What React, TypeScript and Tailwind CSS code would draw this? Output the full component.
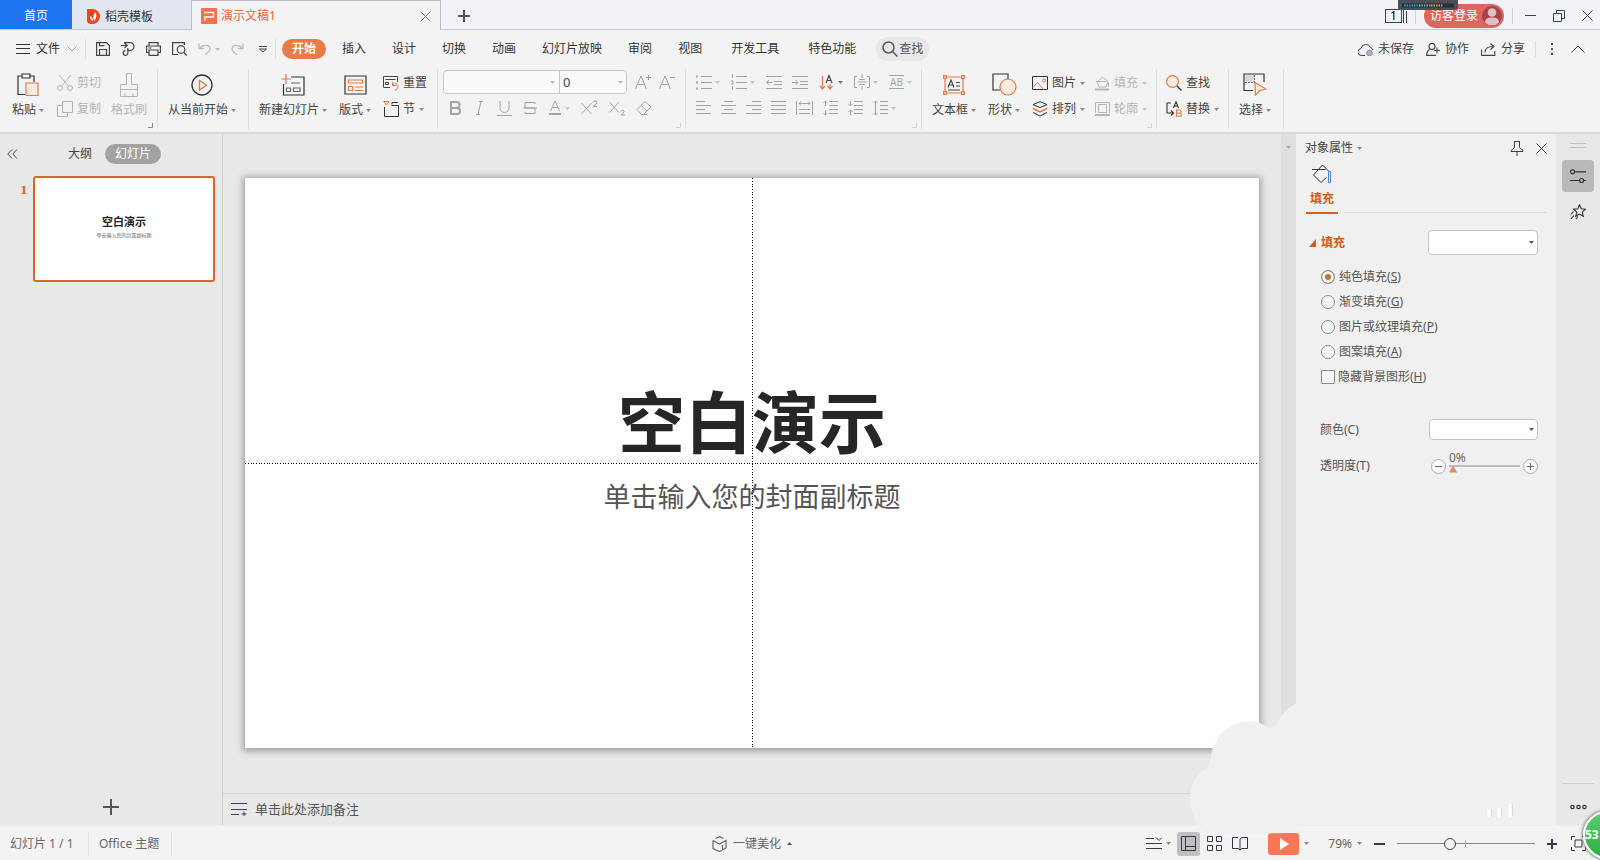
import React from "react";

type P = { children?: React.ReactNode; className?: string };

function Svg({ w, h, children, className = "", sw = 1 }: P & { w: number; h: number; sw?: number }) {
  return (
    <svg
      width={w}
      height={h}
      viewBox={`0 0 ${w} ${h}`}
      fill="none"
      stroke="currentColor"
      strokeWidth={sw}
      className={`shrink-0 ${className}`}
      aria-hidden="true"
    >
      {children}
    </svg>
  );
}

function Caret({ className = "text-[#8c8c8c]", up = false }: { className?: string; up?: boolean }) {
  return (
    <svg width="5" height="3" viewBox="0 0 5 3" className={`shrink-0 ${className}`} aria-hidden="true">
      <path d={up ? "M0 3L2.500 0L5 3z" : "M0 0h5L2.500 3z"} fill="currentColor" />
    </svg>
  );
}

const OR = "#dd7c4a";

/* ---------- title bar ---------- */

function TitleBar() {
  return (
    <header className="flex h-[30px] items-stretch bg-[#f2f3f7] text-[13px]">
      <button className="w-[72px] border-b border-[#c5cbdb] bg-[#1e74f0] pt-[2px] text-xs text-white">首页</button>
      <button className="flex w-[119px] items-center gap-[5px] border-b border-[#c0c4d3] bg-[#e2e6f1] pt-1 pl-[15px] text-xs text-[#333]">
        <svg width="13" height="15" viewBox="0 0 13 15" aria-hidden="true">
          <path d="M0 0h5.500a7.500 7.500 0 0 1 0 15H4a4 4 0 0 1-4-4z" fill="#f2431c" />
          <path d="M6.300 12.500C4 11.500 2.800 9.500 3 7c1.800 .8 3 3 3.300 5.500zM7 12C5.800 8.500 6.300 5 8.500 3c1.600 3 1 6.500-1.500 9z" fill="#fff" />
        </svg>
        稻壳模板
      </button>
      <div className="flex w-[250px] items-center border-x border-t border-[#b9bdcf] bg-[#f3f3f3] px-[9px] pt-px text-[#e8673b]">
        <svg width="16" height="16" viewBox="0 0 16 16" aria-hidden="true">
          <rect width="16" height="16" rx="1" fill="#f3714b" />
          <path d="M3 4.500h9.500v4.500H4v4" fill="none" stroke="#fff" strokeWidth="1.300" />
        </svg>
        <span className="ml-1 text-xs">演示文稿1</span>
        <button aria-label="关闭标签" className="ml-auto text-[#777]">
          <Svg w={11} h={11}><path d="M.5 .5l10 10M10.500 .5l-10 10" /></Svg>
        </button>
      </div>
      <div className="flex flex-1 items-center border-b border-[#c5cbdb] pt-[2px]">
        <button aria-label="新建标签" className="ml-[17px] text-[#555]">
          <Svg w={12} h={12} sw={2}><path d="M6 0v12M0 6h12" /></Svg>
        </button>
        <div className="relative ml-auto flex items-center">
          <button aria-label="窗口 1" className="flex items-center gap-px text-[#35425f]">
            <span className="flex h-[14px] w-[17px] items-center justify-center border border-[#35425f] text-xs leading-none text-black">1</span>
            <Svg w={4} h={14}><path d="M.5 0v14M3.500 2v12" /></Svg>
          </button>
          <span className="ml-2 h-4 w-px bg-[#d0d2d8]" />
          <button className="ml-2 flex h-6 w-20 items-center gap-1 rounded-full bg-[#dc675d] pl-[6px] text-xs text-white">
            访客登录
            <svg width="20" height="20" viewBox="0 0 20 20" aria-hidden="true">
              <circle cx="10" cy="10" r="10" fill="#a8434a" />
              <circle cx="10" cy="6.500" r="4.300" fill="#dfc0c4" />
              <path d="M3 16.500c0-3.500 2-5 7-5s7 1.500 7 5a10 10 0 0 1-14 0z" fill="#dfc0c4" />
            </svg>
          </button>
          <svg width="60" height="10" viewBox="0 0 60 10" className="absolute -top-[4px] left-[13px]" aria-hidden="true">
            <path d="M0 0h60v8q0 2-2 2H2q-2 0-2-2z" fill="#4b4f58" />
            <path d="M4 3.500h52v4H4z" fill="#2b2f38" />
            <path d="M6 5.500h16" stroke="#2ba4dc" strokeWidth="2" strokeDasharray="1.500 1" />
            <path d="M21 5.500h12" stroke="#6fb7a0" strokeWidth="2" strokeDasharray="1.500 1" />
            <path d="M33 5.500h12" stroke="#c9ad42" strokeWidth="2" strokeDasharray="1.500 1" />
          </svg>
          <span className="ml-2 h-4 w-px bg-[#d0d2d8]" />
          <div className="flex items-center gap-[17px] pl-3 pr-[7px] text-[#35425f]">
            <button aria-label="最小化"><Svg w={11} h={12}><path d="M0 5.500h11" /></Svg></button>
            <button aria-label="还原"><Svg w={12} h={12}><path d="M.5 3.500h8v8h-8zM3.500 3.500v-3h8v8h-3" /></Svg></button>
            <button aria-label="关闭"><Svg w={11} h={11}><path d="M.5 .5l10 10M10.500 .5l-10 10" /></Svg></button>
          </div>
        </div>
      </div>
    </header>
  );
}

/* ---------- menu row ---------- */

function MenuRow() {
  return (
    <nav className="flex h-[38px] items-center pl-4 text-xs text-[#333]">
      <button className="flex items-center gap-[6px] whitespace-nowrap">
        <Svg w={14} h={10}><path d="M0 .5h14M0 4.500h14M0 9.500h14" /></Svg>
        文件
        <Svg w={10} h={6} className="ml-px text-[#999]"><path d="M.5 .5l4.500 4.500 4.500-4.500" /></Svg>
      </button>
      <span className="ml-[8px] h-5 w-px bg-[#dcdcdc]" />
      <div className="flex items-center gap-[11px] pl-[10px] text-[#444]">
        <button aria-label="保存">
          <Svg w={14} h={14} sw={1.2}><path d="M.6 .6h9.800l3 3v9.800H.6zM3.500 13.400V7.500h7v5.900M3.500 .6v3h5" /></Svg>
        </button>
        <button aria-label="输出">
          <Svg w={14} h={14} sw={1.2}><path d="M3 .6h6a4 4 0 0 1 0 8H6.500M0 3.500h6M3.500 1l2.700 2.500L3.500 6M6.800 6v5a2.300 2.300 0 1 1-2.300-2.300" /></Svg>
        </button>
        <button aria-label="打印">
          <Svg w={15} h={14} sw={1.2}><path d="M3 4V.6h9V4M3 10.500H.6V4h13.800v6.500H12M3 8h9v5.400H3zM2.500 6h3" /></Svg>
        </button>
        <button aria-label="打印预览">
          <Svg w={15} h={14} sw={1.2}><path d="M6 12.500H.6V.6h11.800V3M12 10.500l2.600 3" /><circle cx="9" cy="7.500" r="3.800" /></Svg>
        </button>
        <button aria-label="撤销" className="flex items-center gap-1 text-[#bdbdbd]">
          <Svg w={13} h={12} sw={1.3}><path d="M1 .5v5h5M1.500 5.500C4 1.500 12 1 12 6c0 3-3 4-5 5.500" /></Svg>
          <Caret className="text-[#bdbdbd]" />
        </button>
        <button aria-label="恢复" className="text-[#bdbdbd]">
          <Svg w={13} h={12} sw={1.3}><path d="M12 .5v5H7M11.500 5.500C9 1.500 1 1 1 6c0 3 3 4 5 5.500" /></Svg>
        </button>
        <button aria-label="自定义快速访问" className="ml-1">
          <Svg w={8} h={7}><path d="M0 .5h8M.5 3l3.500 3 3.500-3z" /></Svg>
        </button>
      </div>
      <span className="ml-[8px] h-5 w-px bg-[#dcdcdc]" />
      <div className="flex items-center gap-[6px] whitespace-nowrap pl-[6px]">
        <button className="h-5 rounded-full bg-[#e97b48] px-[10px] font-bold text-white">开始</button>
        {["插入", "设计", "切换", "动画", "幻灯片放映", "审阅", "视图"].map((t) => (
          <button key={t} className="px-[10px]">{t}</button>
        ))}
        <button className="ml-[3px] px-[10px]">开发工具</button>
        <button className="ml-[3px] px-[10px]">特色功能</button>
        <button className="ml-1 flex h-6 items-center gap-px rounded-full bg-[#e8e8e8] px-[6px] text-[#555]">
          <Svg w={16} h={16} sw={1.5}><circle cx="6.500" cy="6.500" r="5.500" /><path d="M10.500 10.500l5 5" /></Svg>
          查找
        </button>
      </div>
      <div className="ml-auto flex items-center whitespace-nowrap text-[#444]">
        <button className="flex items-center gap-1">
          <Svg w={16} h={13}><path d="M7 12.500H4A3.500 3.500 0 0 1 3 5.500a5 5 0 0 1 9.500-1A4 4 0 0 1 15 7" /><circle cx="11.500" cy="10" r="2.800" fill="#a9b3c9" stroke="#8892aa" /></Svg>
          未保存
        </button>
        <button className="ml-3 flex items-center gap-[5px]">
          <Svg w={14} h={13} sw={1.1}><circle cx="6" cy="3.500" r="3" /><path d="M3.500 6.500C1 8 .6 9.500 .6 12.400h9.500M8 7.500h6M11 4.500v6" /></Svg>
          协作
        </button>
        <button className="ml-3 flex items-center gap-[5px]">
          <Svg w={15} h={13} sw={1.1}><path d="M.6 6.500v5.900h13.200V8M4 9.500c0-4 3-6 8-6M9.500 .5l3.500 3-3.500 3" /></Svg>
          分享
        </button>
        <span className="ml-[10px] h-4 w-px bg-[#dcdcdc]" />
        <button aria-label="更多" className="ml-[15px]">
          <svg width="3" height="12" viewBox="0 0 3 12" fill="#555" aria-hidden="true"><path d="M0 0h2v2H0zM0 5h2v2H0zM0 10h2v2H0z" /></svg>
        </button>
        <button aria-label="折叠功能区" className="ml-[17px] mr-[15px]">
          <Svg w={14} h={8}><path d="M.5 7.500L7 1l6.500 6.500" /></Svg>
        </button>
      </div>
    </nav>
  );
}

/* ---------- ribbon ---------- */

function Group({ children, className = "", launcher }: P & { launcher?: string }) {
  return (
    <div className={`relative flex h-[60px] shrink-0 border-r border-[#dedede] ${className}`}>
      {children}
      {launcher && (
        <button aria-label="更多设置" className={`absolute right-1 bottom-px ${launcher}`}>
          <Svg w={5} h={5}><path d="M4.500 0v4.500H0" /></Svg>
        </button>
      )}
    </div>
  );
}

function Big({ icon, label, caret = true, className = "" }: { icon: React.ReactNode; label: string; caret?: boolean; className?: string }) {
  return (
    <button className={`flex shrink-0 flex-col items-center whitespace-nowrap ${className}`}>
      <span className="flex h-8 items-center pb-px">{icon}</span>
      <span className="flex h-[18px] items-center gap-[3px]">
        {label}
        {caret && <Caret />}
      </span>
    </button>
  );
}

function Small({ icon, label, caret, className = "" }: { icon: React.ReactNode; label: string; caret?: boolean; className?: string }) {
  return (
    <button className={`flex h-[26px] items-center gap-1 whitespace-nowrap ${className}`}>
      <span className="flex w-4 justify-center">{icon}</span>
      {label}
      {caret && <Caret className={className ? "text-[#c6c6c6]" : "text-[#8c8c8c]"} />}
    </button>
  );
}

function Tool({ label, w, children, caret, dark }: P & { label: string; w: number; caret?: boolean; dark?: boolean }) {
  return (
    <button aria-label={label} className="flex h-[26px] shrink-0 items-center gap-[3px]">
      <Svg w={w} h={16}>{children}</Svg>
      {caret && <Caret className={dark ? "text-[#777]" : "text-[#c2c2c2]"} />}
    </button>
  );
}

function Ribbon() {
  return (
    <div className="flex h-16 items-start overflow-hidden pt-px text-xs text-[#444]">
      <Group className="w-[158px] pl-3" launcher="text-[#888]">
        <Big
          label="粘贴"
          icon={
            <Svg w={22} h={24} sw={1.2}>
              <path d="M8 21.500H1V3h3.500M13 3h4v6" stroke="#333" />
              <path d="M5 1h8v4H5z" stroke="#333" />
              <path d="M9 10h12v12.500H9z" stroke={OR} fill="#fbeadf" />
            </Svg>
          }
        />
        <div className="ml-[13px] flex flex-col pt-px">
          <Small className="text-[#b5b5b5]" label="剪切" icon={<Svg w={16} h={16}><path d="M2 0l9.500 11M14 0L4.500 11" /><circle cx="3" cy="13" r="2.500" /><circle cx="13" cy="13" r="2.500" /></Svg>} />
          <Small className="text-[#b5b5b5]" label="复制" icon={<Svg w={16} h={16}><path d="M5.500 .5h10v11h-10zM5 4.500H.5v11h10V12" /></Svg>} />
        </div>
        <Big
          className="ml-[10px] text-[#b5b5b5]"
          label="格式刷"
          caret={false}
          icon={<Svg w={18} h={24}><path d="M6.500 11.500V.5h5v11h6v12H.5v-12zM.5 16.500h17M5 20v3.500M13 20v3.500" /></Svg>}
        />
      </Group>
      <Group className="w-[91px] pl-[10px]">
        <Big label="从当前开始" icon={<Svg w={22} h={22} sw={1.3}><circle cx="11" cy="11" r="10" stroke="#333" /><path d="M8.500 6.500v9.500l7-4.800z" stroke={OR} /></Svg>} />
      </Group>
      <Group className="w-[189px] gap-3 pl-[10px]">
        <Big
          label="新建幻灯片"
          icon={<Svg w={24} h={22} sw={1.2}><path d="M10 3h13v18H2.500V10" stroke="#333" /><path d="M5 0v10M0 5h10" stroke={OR} /><path d="M10 9h9M5.500 14h4v3.500h-4zM12.500 14H19v3.500h-6.500z" stroke="#666" /></Svg>}
        />
        <Big
          label="版式"
          icon={<Svg w={23} h={20} sw={1.2}><path d="M1 1h21v18H1z" stroke="#333" /><path d="M4.500 5h14v3h-14zM4.500 11.500h4v4h-4zM11 12h8M11 15.500h8" stroke={OR} /></Svg>}
        />
        <div className="flex flex-col pt-px">
          <Small label="重置" icon={<Svg w={16} h={16}><path d="M7 12.500H.5v-11h14V7M2.500 4.500h10M2.500 7.500h3v2h-3z" stroke="#444" /><path d="M9.500 7v3.500H13M9.500 10.500c2-3 6-2 5.500 1.500-.2 1.500-1.500 2.500-3 3.500" stroke={OR} /></Svg>} />
          <Small caret label="节" icon={<Svg w={17} h={16}><path d="M1.500 6v9.500h14V4.500h-7M9 3.500V1.500h6" stroke="#333" /><path d="M.8 .5h5.400L3.500 4z" stroke={OR} /></Svg>} />
        </div>
      </Group>
      <Group className="w-[248px] flex-col pl-[5px] text-[#a3a3a3]" launcher="text-[#cfcfcf]">
        <div className="flex h-[26px] items-center">
          <div className="flex h-6 w-[184px] items-center rounded-[4px] border border-[#c8c8c8] bg-[#fafafa]">
            <div className="relative h-full w-[116px] border-r border-[#c8c8c8]">
              <input aria-label="字体" className="h-full w-full bg-transparent px-2 outline-none" />
              <span className="absolute top-[10px] right-[4px]"><Caret className="text-[#bbb]" /></span>
            </div>
            <div className="relative h-full flex-1">
              <input aria-label="字号" defaultValue="0" className="h-full w-full bg-transparent px-[3px] text-[13px] text-[#444] outline-none" />
              <span className="absolute top-[10px] right-[3px]"><Caret className="text-[#bbb]" /></span>
            </div>
          </div>
          <div className="flex gap-2 pl-2">
            <Tool label="增大字号" w={16}><path d="M.5 15L6 2l5.500 13M2.500 10.500h7M13.500 1v5M11 3.500h5" /></Tool>
            <Tool label="减小字号" w={16}><path d="M.5 15L6 2l5.500 13M2.500 10.500h7M11 3.500h5" /></Tool>
          </div>
        </div>
        <div className="flex items-center gap-[11px] pl-[6px]">
          <Tool label="加粗" w={13}><path d="M2 2h5.500a3 3 0 0 1 0 6H2zM2 8h6a3 3 0 0 1 0 6H2z" strokeWidth="2" /></Tool>
          <Tool label="倾斜" w={13}><path d="M6 1.500h4M3 14.500h4M8 1.500L5 14.500" /></Tool>
          <Tool label="下划线" w={15}><path d="M3 1v7a4.500 4.500 0 0 0 9 0V1M0 15.500h15" /></Tool>
          <Tool label="删除线" w={14}><path d="M12 4V2.500H2V8h10v5.500H2V12M0 8h14" /></Tool>
          <Tool label="字体颜色" w={14} caret><path d="M2.500 11L7 1l4.500 10M4 7.500h6" /><path d="M1 14h12" strokeWidth="2" /></Tool>
          <Tool label="上标" w={17}><path d="M.5 3l10 11M10.500 3l-10 11M12 2.500q0-1.500 2-1.500t2 1.500q0 1.500-4 4h4" /></Tool>
          <Tool label="下标" w={16}><path d="M.5 2l9.500 10.500M10 2L.5 12.500M12 11.500q0-1 1.500-1t1.500 1q0 1.500-3 3.500h4" /></Tool>
          <Tool label="清除格式" w={16}><path d="M1 9.500L9 1.500l6 5.500-7.500 7.500h-2zM5 5.500l6 5.500M5 14.500h6" /></Tool>
        </div>
      </Group>
      <Group className="w-[236px] flex-col pl-[10px] text-[#a3a3a3]" launcher="text-[#cfcfcf]">
        <div className="flex items-center gap-[11px]">
          <Tool label="项目符号" w={16} caret><path d="M5 2.500h11M5 8.500h11M5 14.500h11" /><path d="M0 2.500h2M0 8.500h2M0 14.500h2" strokeWidth="2" /></Tool>
          <Tool label="编号" w={16} caret><path d="M5 2.500h11M5 8.500h11M5 14.500h11M1.500 0v4M0 7h2v3H0M1.500 12v4" /></Tool>
          <div className="flex gap-[10px]">
            <Tool label="减少缩进" w={16}><path d="M0 2.500h16M8 7.500h8M8 10.500h8M0 14.500h16M.5 8.500h6M3 6L.5 8.500 3 11" /></Tool>
            <Tool label="增加缩进" w={16}><path d="M0 2.500h16M8 7.500h8M8 10.500h8M0 14.500h16M0 8.500h6M3.500 6L6 8.500 3.500 11" /></Tool>
          </div>
          <Tool label="文字方向" w={16} caret dark>
            <path d="M3.500 2v12.500M1 12l2.500 3L6 12M11 10v4.500M8.500 12l2.500 3 2.500-3" stroke={OR} strokeWidth="1.200" />
            <path d="M7 9l3-7.500L13 9M8 6.500h4" stroke="#444" strokeWidth="1.200" />
          </Tool>
          <Tool label="对齐文本" w={16} caret><path d="M3 2.500H.5v11H3M13 2.500h2.500v11H13M3.500 8h9M5 5.500h6M5 10.500h6M8 0v4M8 12v4" /></Tool>
          <button aria-label="文字效果" className="flex h-[26px] items-center gap-[3px] text-[10px]">
            <span className="border-y border-[#a3a3a3] px-px leading-3">AB</span>
            <Caret className="text-[#c2c2c2]" />
          </button>
        </div>
        <div className="flex items-center gap-[10px]">
          <Tool label="左对齐" w={15}><path d="M0 1.500h9M0 5.500h15M0 9.500h9M0 13.500h15" /></Tool>
          <Tool label="居中" w={15}><path d="M3 1.500h9M0 5.500h15M3 9.500h9M0 13.500h15" /></Tool>
          <Tool label="右对齐" w={15}><path d="M6 1.500h9M0 5.500h15M6 9.500h9M0 13.500h15" /></Tool>
          <Tool label="两端对齐" w={15}><path d="M0 1.500h15M0 5.500h15M0 9.500h15M0 13.500h15" /></Tool>
          <Tool label="分散对齐" w={17}><path d="M.5 1v14M16.500 1v14M3 3.500h11M5 1.500L3 3.500l2 2M12 1.500l2 2-2 2M3 9.500h11M3 13.500h11" /></Tool>
          <Tool label="增加段落间距" w={15}><path d="M2.500 1v5M.5 3l2-2 2 2M2.500 10v5M.5 13l2 2 2-2M6 1.500h9M6 5.500h9M6 9.500h9M6 13.500h9" /></Tool>
          <Tool label="减少段落间距" w={15}><path d="M2.500 1v5M.5 4l2 2 2-2M2.500 10v5M.5 12l2-2 2 2M6 1.500h9M6 5.500h9M6 9.500h9M6 13.500h9" /></Tool>
          <Tool label="行距" w={15} caret><path d="M2.500 1v14M.5 3l2-2 2 2M.5 13l2 2 2-2M7 1.500h8M7 5.500h8M7 9.500h8M7 13.500h8" /></Tool>
        </div>
      </Group>
      <Group className="w-[235px] gap-3 pl-[10px]" launcher="text-[#cfcfcf]">
        <Big
          label="文本框"
          icon={
            <Svg w={22} h={20} sw={1.2}>
              <path d="M2 2h18v16H2z" stroke={OR} />
              <path d="M.7 .7h2.600v2.600H.7zM18.700 .7h2.600v2.600h-2.600zM.7 16.700h2.600v2.600H.7zM18.700 16.700h2.600v2.600h-2.600z" stroke={OR} fill="#fff" />
              <path d="M5 12.500L8 5l3 7.500M6 10h4M13 7.500h4M13 11h4M5 15h12" stroke="#444" />
            </Svg>
          }
        />
        <Big
          label="形状"
          icon={<Svg w={25} h={23} sw={1.2}><path d="M8 17H1V1h15v5" stroke="#333" /><circle cx="16" cy="14" r="8" stroke={OR} fill="#fbeadf" /></Svg>}
        />
        <div className="flex gap-[9px] pt-px">
          <div className="flex flex-col">
            <Small caret label="图片" icon={<Svg w={16} h={14}><path d="M.5 .5h15v13H.5z" stroke="#333" /><path d="M1 11.500l4.500-5 6 7" stroke={OR} /><circle cx="12" cy="4.500" r="1.500" stroke={OR} /></Svg>} />
            <Small caret label="排列" icon={<Svg w={16} h={16}><path d="M8 .6l7 3-7 3-7-3z" stroke="#333" /><path d="M1 7.500l7 3.500 7-3.500" stroke={OR} strokeWidth="1.500" /><path d="M1 11.500l7 3.500 7-3.500" stroke="#333" /></Svg>} />
          </div>
          <div className="flex flex-col">
            <Small caret className="text-[#b5b5b5]" label="填充" icon={<Svg w={15} h={15}><path d="M2 6.500L7.500 1 13 5.500 11 11H4zM1 5.500h10M13.500 7v4" /><path d="M0 13.500h14" strokeWidth="2" /></Svg>} />
            <Small caret className="text-[#b5b5b5]" label="轮廓" icon={<Svg w={15} h={14}><path d="M.5 11V.5h14V11M3.500 2.500h8v8h-8z" /><path d="M0 13h15" strokeWidth="2" /></Svg>} />
          </div>
        </div>
      </Group>
      <Group className="w-[72px] flex-col pt-px pl-[9px]">
        <Small label="查找" icon={<Svg w={16} h={16} sw={1.2}><circle cx="6.500" cy="6.500" r="5.900" stroke={OR} fill="#fbeadf" /><path d="M11 11l4.500 4.500" stroke="#333" /></Svg>} />
        <Small
          caret
          label="替换"
          icon={<Svg w={16} h={16} sw={1.1}><path d="M5 2H1v10h6M5 9.500L7.500 12 5 14.500M7.500 7L10 .8 12.500 7M8.300 5h3.400" stroke="#333" /><path d="M10.500 9h3a1.400 1.400 0 0 1 0 3h-3zM10.500 12h3.200a1.500 1.500 0 0 1 0 3.300h-3.200z" stroke={OR} /></Svg>}
        />
      </Group>
      <Group className="w-[55px] pl-[10px]">
        <Big
          label="选择"
          icon={
            <Svg w={24} h={23} sw={1.2}>
              <path d="M10 17.500H1V1h20v8" stroke="#333" />
              <path d="M2 2h9v7H2z" fill="#d8d8d8" stroke="none" />
              <path d="M11.500 2v7.500H2" stroke="#777" strokeDasharray="2 1" />
              <path d="M12 9.500l11 6.500-6 1.500-4.500 4.500z" stroke={OR} fill="#fbeadf" />
            </Svg>
          }
        />
      </Group>
    </div>
  );
}

/* ---------- left panel ---------- */

function SlidePanel() {
  return (
    <aside className="flex w-[223px] shrink-0 flex-col border-r border-[#cfcfcf] text-xs">
      <div className="flex h-10 items-center pl-[7px]">
        <button aria-label="收起" className="text-[#444]">
          <Svg w={11} h={10}><path d="M5 .5L.8 5 5 9.500M10 .5L5.800 5 10 9.500" /></Svg>
        </button>
        <button className="ml-[50px] text-[#444]">大纲</button>
        <button className="ml-[13px] h-5 rounded-full bg-[#a2a2a2] px-[10px] text-white">幻灯片</button>
      </div>
      <div className="flex gap-[6px] pt-[2px] pr-[7px] pl-5">
        <span className="w-[7px] pt-2 font-['DejaVu_Serif'] text-[11px] font-bold text-[#dd6425]">1</span>
        <div className="flex h-[106px] flex-1 flex-col items-center rounded-[3px] border-2 border-[#dd6425] bg-white pt-9">
          <span className="text-[11px] leading-[15px] font-bold text-[#222]">空白演示</span>
          <span className="mt-[3px] text-[5px] leading-[6px] text-[#666]">单击输入您的封面副标题</span>
        </div>
      </div>
      <button aria-label="新建幻灯片" className="mx-auto mt-auto mb-[10px] text-[#555]">
        <Svg w={16} h={16} sw={2}><path d="M8 0v16M0 8h16" /></Svg>
      </button>
    </aside>
  );
}

/* ---------- editor ---------- */

function Editor() {
  return (
    <main className="flex min-w-0 flex-1 flex-col">
      <div className="flex flex-1 pt-11 pr-[22px] pb-[45px] pl-[22px]">
        <div className="relative flex flex-1 flex-col items-center bg-white pt-[200px] shadow-[0_1px_7px_2px_#9c9c9c]">
          <h1 className="text-[67px] leading-[88px] font-bold text-[#262626]">空白演示</h1>
          <p className="mt-[11px] text-[27px] leading-10 text-[#555]">单击输入您的封面副标题</p>
          <div className="absolute top-0 bottom-0 left-1/2 w-px bg-[repeating-linear-gradient(to_bottom,#000_0_1px,transparent_1px_3px,#000_3px_4px,transparent_4px_6px,#000_6px_7px,transparent_7px_8px)]" />
          <div className="absolute top-1/2 right-0 left-0 h-px bg-[repeating-linear-gradient(to_right,#000_0_1px,transparent_1px_3px,#000_3px_4px,transparent_4px_6px,#000_6px_7px,transparent_7px_8px)]" />
        </div>
      </div>
      <button className="flex h-8 items-center gap-2 border-t border-[#d2d2d2] pl-2 text-[13px] text-[#555]">
        <Svg w={16} h={13} className="text-[#3b4357]"><path d="M0 .5h16M0 6.500h16M0 11.500h8M13 8.500v5M10.500 11h5" /></Svg>
        单击此处添加备注
      </button>
    </main>
  );
}

/* ---------- properties ---------- */

function Select({ id, className }: { id: string; className: string }) {
  return (
    <div className={`relative ${className}`}>
      <select id={id} className="h-full w-full appearance-none rounded-[4px] border border-[#c4c4c4] bg-white">
        <option />
      </select>
      <span className="pointer-events-none absolute inset-y-0 right-1 flex items-center"><Caret className="text-[#555]" /></span>
    </div>
  );
}

const FILLS: [string, string][] = [["纯色填充", "S"], ["渐变填充", "G"], ["图片或纹理填充", "P"], ["图案填充", "A"]];

function Properties() {
  return (
    <aside className="w-[260px] shrink-0 bg-[#f0f0f0] text-xs text-[#555]">
      <div className="flex h-7 items-center pr-[9px] pl-[9px] text-[#444]">
        <button className="flex items-center gap-1">对象属性 <Caret /></button>
        <button aria-label="固定" className="ml-auto">
          <Svg w={14} h={15} className="text-[#35425f]"><path d="M4 .5h6M4.500 .5v6L1 9.500v1h12v-1L9.500 6.500v-6M7 10.500V15" /></Svg>
        </button>
        <button aria-label="关闭面板" className="ml-3">
          <Svg w={11} h={11} className="text-[#35425f]"><path d="M.5 .5l10 10M10.500 .5l-10 10" /></Svg>
        </button>
      </div>
      <div className="flex items-end pt-[2px] pr-[10px]">
        <button className="ml-[10px] flex w-8 flex-col items-center border-b-2 border-[#dd5f15] font-bold text-[#d9590f]">
          <Svg w={21} h={20}>
            <path d="M9 18.500L1.500 11l9-10 6.500 6.500M0 5.500h13.500M9 18.500l5.500-5" stroke="#333" />
            <path d="M16.500 7.500h2v11h-2z" stroke="#4c7fd6" />
          </Svg>
          <span className="mt-[6px] mb-[4px] leading-[18px]">填充</span>
        </button>
        <span className="mb-px ml-[5px] h-px flex-1 bg-[#d9d9d9]" />
      </div>
      <div className="mt-4 flex items-center pr-[18px] pl-[13px]">
        <svg width="7" height="8" viewBox="0 0 7 8" aria-hidden="true"><path d="M7 0v8H0z" fill="#d9590f" /></svg>
        <label htmlFor="fill-preset" className="ml-[5px] font-bold text-[#d9590f]">填充</label>
        <Select id="fill-preset" className="ml-auto h-[25px] w-[110px]" />
      </div>
      <div className="mt-[9px] pl-[25px]">
        {FILLS.map(([t, k], i) => (
          <label key={k} className="flex h-[25px] items-center gap-1">
            <input
              type="radio"
              name="fill"
              defaultChecked={i === 0}
              className="size-[14px] appearance-none rounded-full border border-[#8a8a8a] bg-[#f6f6f6] checked:bg-[#c56f3a] checked:shadow-[inset_0_0_0_3px_#f6f6f6]"
            />
            <span>{t}(<u>{k}</u>)</span>
          </label>
        ))}
        <label className="flex h-[25px] items-center gap-[3px]">
          <input type="checkbox" className="size-[14px] appearance-none rounded-[1px] border border-[#8a8a8a] bg-[#f6f6f6]" />
          <span>隐藏背景图形(<u>H</u>)</span>
        </label>
      </div>
      <div className="mt-[30px] flex items-center justify-between pr-[18px] pl-6">
        <label htmlFor="fill-color">颜色(C)</label>
        <Select id="fill-color" className="h-[21px] w-[109px]" />
      </div>
      <div className="mt-[14px] flex h-6 items-center pr-[18px] pl-6">
        <label htmlFor="opacity">透明度(T)</label>
        <div className="ml-auto flex items-center gap-[3px] text-[#666]">
          <button aria-label="减小透明度"><Svg w={15} h={15}><circle cx="7.500" cy="7.500" r="7" fill="#fff" stroke="#aaa" /><path d="M4 7.500h7" /></Svg></button>
          <div className="relative flex w-[71px] items-center">
            <span className="absolute -top-[13px] left-0 leading-none">0%</span>
            <input
              id="opacity"
              type="range"
              defaultValue={0}
              className="h-[2px] w-full appearance-none bg-[#b9bac2] [&::-webkit-slider-thumb]:mt-[6px] [&::-webkit-slider-thumb]:h-[7px] [&::-webkit-slider-thumb]:w-2 [&::-webkit-slider-thumb]:appearance-none [&::-webkit-slider-thumb]:bg-[#e8894f] [&::-webkit-slider-thumb]:[clip-path:polygon(50%_0,100%_100%,0_100%)]"
            />
          </div>
          <button aria-label="增大透明度"><Svg w={15} h={15}><circle cx="7.500" cy="7.500" r="7" fill="#fff" stroke="#aaa" /><path d="M4 7.500h7M7.500 4v7" /></Svg></button>
        </div>
      </div>
    </aside>
  );
}

function SideBar() {
  return (
    <aside className="flex w-11 shrink-0 flex-col items-center text-[#333]">
      <Svg w={16} h={5} className="mt-[9px] text-[#c2c2c2]"><path d="M0 .5h16M0 4.500h16" /></Svg>
      <button aria-label="对象属性" className="mt-3 flex size-8 items-center justify-center rounded-[4px] bg-[#b9b9b9]">
        <Svg w={16} h={14} sw={1.2}><circle cx="2.600" cy="2.800" r="2" /><path d="M4.800 2.800H16M0 11.500h9.500M14 11.500h2" /><circle cx="11.600" cy="11.500" r="2" /></Svg>
      </button>
      <button aria-label="动画" className="mt-3">
        <Svg w={16} h={16} sw={1.1}><path d="M9.500 .8l1.700 4 4.300.4-3.200 2.900 1 4.200-3.800-2.200-3.700 2.200 1-4.200L3.600 5.200l4.200-.4zM3.500 7.500L.8 10.500M4 11.500L.8 15M8 12.500l-2 2.500" /></Svg>
      </button>
      <span className="mt-auto h-px w-8 bg-[#cfcfcf]" />
      <button aria-label="更多" className="mt-5 mb-[15px]">
        <Svg w={17} h={6} sw={1.2}><circle cx="2.500" cy="3" r="1.700" /><circle cx="8.500" cy="3" r="1.700" /><circle cx="14.500" cy="3" r="1.700" /></Svg>
      </button>
    </aside>
  );
}

/* ---------- status bar ---------- */

function StatusBar() {
  return (
    <footer className="flex h-[35px] items-center border-t border-[#ececec] bg-[#f3f3f3] pt-px text-xs text-[#666]">
      <div className="flex flex-1 items-center">
        <span className="ml-[10px] w-[79px] border-r border-[#e0e0e0] py-1 whitespace-nowrap">幻灯片 1 / 1</span>
        <span className="border-r border-[#e0e0e0] py-1 pr-3 pl-[10px]">Office 主题</span>
      </div>
      <button className="mr-24 flex items-center gap-[6px]">
        <Svg w={15} h={16} sw={1.2}><path d="M3.500 2.500l4-1.800 4 1.800M1 4.500v8l6.500 3 2.500-1M1 4.500L7.500 8 14 4.500v7.500l-3.500 2M10.500 9v5" /></Svg>
        一键美化
        <Caret up className="text-[#555]" />
      </button>
      <div className="flex flex-1 items-center justify-end text-[#35394a]">
        <button aria-label="视图选项" className="flex items-center gap-1">
          <Svg w={16} h={13}><path d="M0 1.500h8M10 .5l3 3 3-3M0 6.500h16M0 11.500h16" /></Svg>
          <Caret />
        </button>
        <button aria-label="普通视图" className="ml-[6px] flex h-6 w-[23px] items-center justify-center rounded-[3px] bg-[#bfc0c3]">
          <Svg w={15} h={15}><path d="M.5 .5h14v14H.5zM4.500 .5v14M4.500 10.500h10" /></Svg>
        </button>
        <button aria-label="幻灯片浏览" className="ml-[7px]">
          <Svg w={15} h={15}><path d="M.5 .5h5v5h-5zM9.500 .5h5v5h-5zM.5 9.500h5v5h-5zM9.500 9.500h5v5h-5z" /></Svg>
        </button>
        <button aria-label="阅读视图" className="ml-[10px]">
          <Svg w={16} h={15}><path d="M6 1.500H.5v11H6l2 1.500 2-1.500h5.500v-11H10L8 3v11" /></Svg>
        </button>
        <button aria-label="放映" className="ml-5 flex h-[22px] w-[31px] items-center justify-center rounded-[3px] bg-[#fb7656]">
          <svg width="10" height="12" viewBox="0 0 10 12" aria-hidden="true"><path d="M1 0l9 6-9 6z" fill="#fff" /></svg>
        </button>
        <span className="ml-[5px]"><Caret /></span>
        <button className="ml-[19px] flex items-center gap-[5px] text-[#666]">79% <Caret /></button>
        <button aria-label="缩小" className="ml-3"><Svg w={11} h={10} sw={2}><path d="M0 5h11" /></Svg></button>
        <div className="relative ml-3 flex w-[138px] items-center">
          <span className="absolute left-[68px] h-[7px] w-px bg-[#aaa]" />
          <input
            aria-label="缩放"
            type="range"
            min={0}
            max={100}
            defaultValue={37}
            className="h-px w-full appearance-none bg-[#888] [&::-webkit-slider-thumb]:size-3 [&::-webkit-slider-thumb]:appearance-none [&::-webkit-slider-thumb]:rounded-full [&::-webkit-slider-thumb]:border [&::-webkit-slider-thumb]:border-[#444] [&::-webkit-slider-thumb]:bg-[#f3f3f3]"
          />
        </div>
        <button aria-label="放大" className="ml-3"><Svg w={10} h={10} sw={2}><path d="M5 0v10M0 5h10" /></Svg></button>
        <button aria-label="适应窗口" className="mr-[14px] ml-[14px]">
          <Svg w={15} h={15}><path d="M.5 4V.5H4M11 .5h3.500V4M14.500 11v3.500H11M4 14.500H.5V11M4 4h7v7H4z" /></Svg>
        </button>
      </div>
    </footer>
  );
}

export default function App() {
  return (
    <div className="relative flex min-h-screen flex-col overflow-hidden bg-[#e8e8e8] font-['Noto_Sans','Noto_Sans_CJK_SC',sans-serif]">
      <TitleBar />
      <div className="border-b-2 border-[#dadada] bg-[#f3f3f3]">
        <MenuRow />
        <Ribbon />
      </div>
      <div className="flex flex-1 items-stretch">
        <SlidePanel />
        <Editor />
        <div className="flex w-[15px] shrink-0 justify-center bg-[#dfdfdf] pt-3"><Caret className="text-[#aaa]" /></div>
        <Properties />
        <SideBar />
      </div>
      <StatusBar />
      <svg width="140" height="160" viewBox="0 0 140 160" className="pointer-events-none absolute right-[270px] bottom-0" aria-hidden="true">
        <path d="M107 3C97 8 92 14 88 22c-2 4-5 5-8 5-4 0-7-3-12-5-5-1-10-1-15 0-11 2-21 8-26 18-4 6-6 12-6 18-1 6-2 8-4 10C7 73 0 84 0 97c0 13 5 25 13 34 30 4 70 2 94 2z" fill="#f0f0f0" />
      </svg>
      <svg width="34" height="16" viewBox="0 0 34 16" className="pointer-events-none absolute right-[84px] bottom-[42px]" aria-hidden="true">
        <path d="M7 8v6M17 7v7M28 3v11" stroke="#fff" strokeWidth="3" strokeLinecap="round" />
        <path d="M9.500 7v7M19.500 6v8M30.500 2v12" stroke="#dcdcdc" strokeWidth="1" />
      </svg>
      <button className="absolute right-[-31px] bottom-px flex size-12 items-center rounded-full border-2 border-white bg-[linear-gradient(#58cf6d,#2fae45)] text-xs font-bold text-white shadow-[0_0_3px_1px_#777]">53</button>
    </div>
  );
}
